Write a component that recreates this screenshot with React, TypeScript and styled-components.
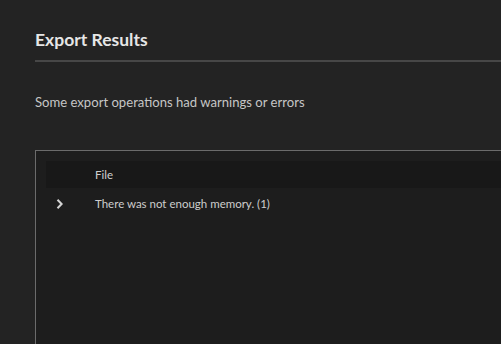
import * as React from "react";
import styled, { createGlobalStyle } from "styled-components";

const GlobalStyle = createGlobalStyle`
  html, body {
    margin: 0;
    padding: 0;
    background: #232323;
    overflow: hidden;
  }
  body {
    font-family: "Lato", "Open Sans", sans-serif;
  }
`;

const SPage = styled.div`
  width: 501px;
  height: 344px;
  padding: 27px 0 0 35px;
  box-sizing: border-box;
  display: flex;
  flex-direction: column;
  overflow: hidden;
`;

const STitle = styled.h1`
  margin: 0;
  font-size: 17.5px;
  font-weight: 700;
  line-height: 25px;
  color: #e6e6e6;
  padding-bottom: 8px;
  border-bottom: 2px solid #474747;
`;

const SMessage = styled.p`
  margin: 31px 0 0;
  font-size: 13.1px;
  line-height: 18px;
  color: #c6c6c6;
`;

const STable = styled.div`
  margin-top: 39px;
  flex: 1;
  background: #1d1d1d;
  border-top: 1px solid #6b6b6b;
  border-left: 1px solid #6b6b6b;
  padding: 10px 0 0 10px;
`;

const SHeader = styled.div`
  display: flex;
  align-items: center;
  height: 27px;
  background: #181818;
  font-size: 11.5px;
  color: #cfcfcf;
`;

const SRow = styled.div`
  display: flex;
  align-items: center;
  height: 31px;
  font-size: 11.5px;
  color: #cdcdcd;
`;

const SToggle = styled.div`
  width: 49px;
  display: flex;
  align-items: center;
  justify-content: flex-start;
  padding-left: 10px;
  box-sizing: border-box;
`;

const SCell = styled.div`
  flex: 1;
`;

const Chevron = () => (
  <svg width="8" height="12" viewBox="0 0 8 12">
    <path d="M1.5 1.8 L5.6 6 L1.5 10.2" fill="none" stroke="#d4d4d4" strokeWidth="2" />
  </svg>
);

const App = () => (
  <>
    <GlobalStyle />
    <SPage>
      <STitle>Export Results</STitle>
      <SMessage>Some export operations had warnings or errors</SMessage>
      <STable>
        <SHeader>
          <SToggle />
          <SCell>File</SCell>
        </SHeader>
        <SRow>
          <SToggle>
            <Chevron />
          </SToggle>
          <SCell>There was not enough memory. (1)</SCell>
        </SRow>
      </STable>
    </SPage>
  </>
);

export default App;
